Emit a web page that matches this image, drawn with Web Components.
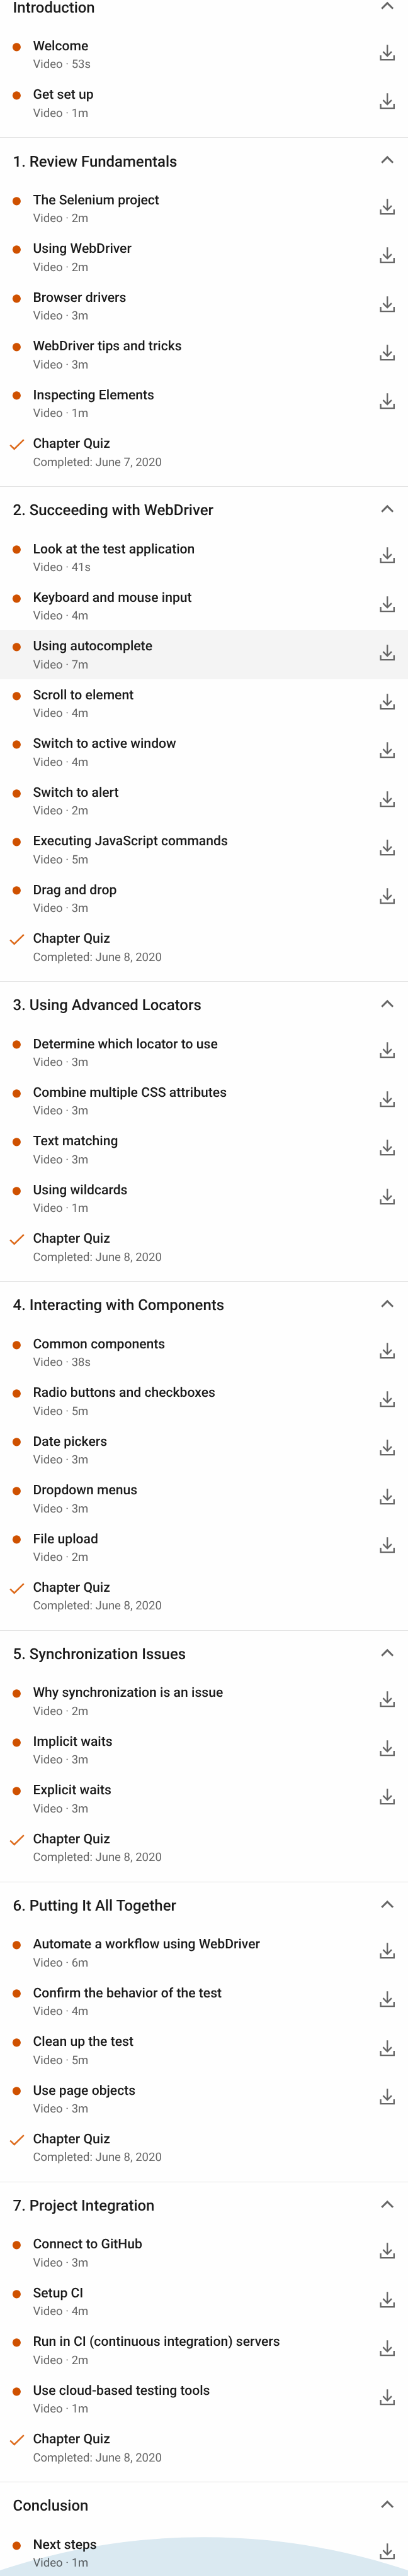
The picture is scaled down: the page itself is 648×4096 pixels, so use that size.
<!DOCTYPE html>
<html lang="en">
<head>
<meta charset="utf-8">
<title>Course contents</title>
<style>
html,body{margin:0;padding:0;background:#fefefe}
body{height:4096px;overflow:hidden;font-family:Roboto,"Liberation Sans",sans-serif;text-rendering:geometricPrecision}
</style>
</head>
<body>
<course-contents></course-contents>
<script>
const chapters = [
  ['Introduction', ['Welcome|53s','Get set up|1m']],
  ['1. Review Fundamentals', ['The Selenium project|2m','Using WebDriver|2m','Browser drivers|3m','WebDriver tips and tricks|3m','Inspecting Elements|1m'], 'June 7, 2020'],
  ['2. Succeeding with WebDriver', ['Look at the test application|41s','Keyboard and mouse input|4m','Using autocomplete|7m|active','Scroll to element|4m','Switch to active window|4m','Switch to alert|2m','Executing JavaScript commands|5m','Drag and drop|3m'], 'June 8, 2020'],
  ['3. Using Advanced Locators', ['Determine which locator to use|3m','Combine multiple CSS attributes|3m','Text matching|3m','Using wildcards|1m'], 'June 8, 2020'],
  ['4. Interacting with Components', ['Common components|38s','Radio buttons and checkboxes|5m','Date pickers|3m','Dropdown menus|3m','File upload|2m'], 'June 8, 2020'],
  ['5. Synchronization Issues', ['Why synchronization is an issue|2m','Implicit waits|3m','Explicit waits|3m'], 'June 8, 2020'],
  ['6. Putting It All Together', ['Automate a workflow using WebDriver|6m','Confirm the behavior of the test|4m','Clean up the test|5m','Use page objects|3m'], 'June 8, 2020'],
  ['7. Project Integration', ['Connect to GitHub|3m','Setup CI|4m','Run in CI (continuous integration) servers|2m','Use cloud-based testing tools|1m'], 'June 8, 2020'],
  ['Conclusion', ['Next steps|1m']]
];

class CourseIcon extends HTMLElement {
  connectedCallback() {
    const shapes = {
      chevron: '<path d="M12.2 41.3 27 26.5 41.8 41.3" stroke-width="5"/>',
      download: '<path d="M27 5.5V35M15.7 23.7 27 35 38.3 23.7M9.3 33.5V45.3H44.7V33.5" stroke-width="4"/>',
      dot: '<circle cx="44" cy="44.7" r="11" fill="currentColor" stroke="none"/>',
      check: '<path d="M27 46 37.8 56.6 63 32" stroke-width="4.2"/>'
    };
    const name = this.getAttribute('name');
    const wide = name === 'dot' || name === 'check';
    this.attachShadow({mode: 'open'}).innerHTML = `
      <style>
        :host{display:block;flex:none;color:#666}
        :host([name=dot]){color:#cf5100}
        :host([name=check]){color:#dd6b1c}
        svg{display:block;fill:none;stroke:currentColor}
      </style>
      <svg ${wide ? 'width="52.5" height="77.4" viewBox="0 0 87.5 129"' : 'width="32.4" height="32.4" viewBox="0 0 54 54"'}>${shapes[name]}</svg>`;
  }
}

class CourseItem extends HTMLElement {
  connectedCallback() {
    const quiz = this.hasAttribute('quiz');
    this.attachShadow({mode: 'open'}).innerHTML = `
      <style>
        :host{display:flex;height:77.44px;box-sizing:border-box;padding-right:16.2px}
        :host([active]){background:#f4f4f4}
        .text{flex:1;padding-top:13.2px;white-space:nowrap}
        .title{font-size:21.15px;line-height:26px;font-weight:500;color:#1a1a1a}
        .meta{font-size:18.52px;line-height:22px;margin-top:4.5px;color:#666}
        .save{margin-top:20px}
      </style>
      <course-icon name="${quiz ? 'check' : 'dot'}"></course-icon>
      <div class="text"><div class="title"><slot></slot></div><div class="meta"><slot name="meta"></slot></div></div>
      ${quiz ? '' : '<course-icon class="save" name="download"></course-icon>'}`;
  }
}

class CourseChapter extends HTMLElement {
  connectedCallback() {
    this.attachShadow({mode: 'open'}).innerHTML = `
      <style>
        :host{display:block;box-sizing:border-box;padding-bottom:15.61px;border-bottom:1px solid #e2e2e2;margin-bottom:-1px}
        :host(:last-of-type){border:0}
        header{display:flex;justify-content:space-between;height:74.45px;padding:0 16.2px 0 20.6px;box-sizing:border-box}
        h2{margin:0;padding-top:22.3px;font-size:23.94px;line-height:32px;font-weight:500;color:#1a1a1a;white-space:nowrap}
        course-icon{margin-top:16px}
      </style>
      <header><h2>${this.getAttribute('heading')}</h2><course-icon name="chevron"></course-icon></header>
      <slot></slot>`;
  }
}

class CourseContents extends HTMLElement {
  connectedCallback() {
    this.attachShadow({mode: 'open'}).innerHTML = `
      <style>
        :host{display:block;position:relative;height:4096px;overflow:hidden}
        main{margin-top:-26.7px}
        .wave{position:absolute;left:0;bottom:0;display:block;mix-blend-mode:multiply}
      </style>
      <main>${chapters.map(([heading, items, done]) => `
        <course-chapter heading="${heading}">${items.map(row => {
          const [title, length, active] = row.split('|');
          return `<course-item ${active || ''}>${title}<span slot="meta">Video · ${length}</span></course-item>`;
        }).join('')}${done ? `<course-item quiz>Chapter Quiz<span slot="meta">Completed: ${done}</span></course-item>` : ''}</course-chapter>`).join('')}
      </main>
      <svg class="wave" width="648" height="62" viewBox="0 0 648 62"><circle cx="324" cy="1020.8" r="1020.6" fill="#dbeaf2"/></svg>`;
  }
}
customElements.define('course-icon', CourseIcon);
customElements.define('course-item', CourseItem);
customElements.define('course-chapter', CourseChapter);
customElements.define('course-contents', CourseContents);
</script>
</body>
</html>
